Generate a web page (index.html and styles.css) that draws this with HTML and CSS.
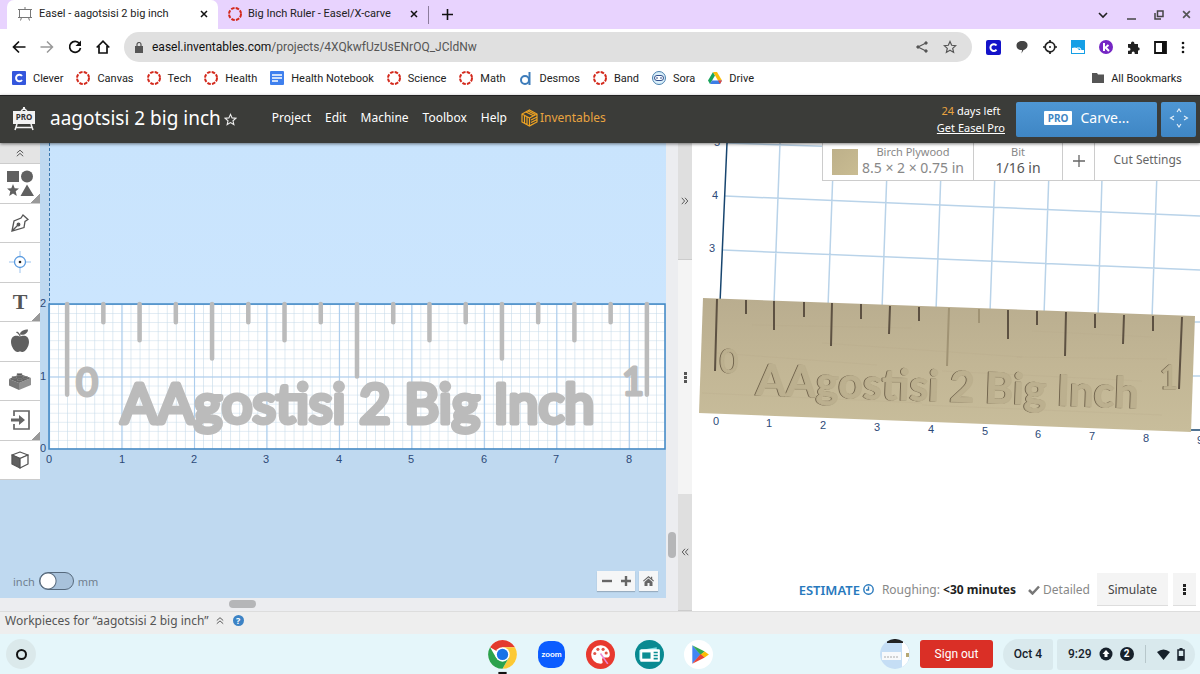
FILE: index.html
```
<!DOCTYPE html>
<html lang="en">
<head>
    <meta charset="UTF-8">
    <meta name="viewport" content="width=device-width, initial-scale=1">
    <title>Easel - aagotsisi 2 big inch</title>
    <link rel="stylesheet" href="styles.css">
</head>
<body>

<!-- Shared icons -->
<svg class="sprite" width="0" height="0" aria-hidden="true">
    <symbol id="ring" viewBox="0 0 14 14">
        <circle cx="7" cy="7" r="6" fill="none" stroke="#d3291c" stroke-width="2" stroke-dasharray="3.5 1.21"/>
    </symbol>
    <symbol id="close" viewBox="0 0 8 8">
        <path d="M1 1l6 6M7 1L1 7" fill="none" stroke="currentColor" stroke-width="1.5"/>
    </symbol>
    <symbol id="chevrons" viewBox="0 0 10 10">
        <path d="M1 5l4-3.5L9 5M1 9l4-3.5L9 9" fill="none" stroke="currentColor" stroke-width="1.2"/>
    </symbol>
    <symbol id="star" viewBox="0 0 14 14">
        <path d="M7 1.5l1.7 3.8 4 .4-3 2.7.9 4L7 10.3l-3.6 2.1.9-4-3-2.7 4-.4z" fill="none" stroke="currentColor" stroke-width="1.2"/>
    </symbol>
</svg>

<!-- Browser tabs -->
<div class="tabs">
    <div class="tab active">
        <svg width="16" height="16" viewBox="0 0 16 16" fill="none" stroke="#777" stroke-width="1"><path d="M2.5 3.5h11v8h-11zM1 3.5h14M1 11.5h14M8 1v2.5M4.5 11.5L3.5 14.5M11.5 11.5l1 3"/></svg>
        <span>Easel - aagotsisi 2 big inch</span>
        <button class="icon-btn" aria-label="Close tab"><svg width="8" height="8"><use href="#close"/></svg></button>
    </div>
    <div class="tab">
        <svg width="14" height="14"><use href="#ring"/></svg>
        <span>Big Inch Ruler - Easel/X-carve</span>
        <button class="icon-btn" aria-label="Close tab"><svg width="8" height="8"><use href="#close"/></svg></button>
    </div>
    <button class="icon-btn new-tab" aria-label="New tab"><svg width="11" height="11" viewBox="0 0 11 11" stroke="#111" stroke-width="1.6"><path d="M5.5 0v11M0 5.5h11"/></svg></button>
    <div class="window-buttons">
        <button class="icon-btn" aria-label="Search tabs"><svg width="10" height="10" viewBox="0 0 10 10" fill="none" stroke="#222" stroke-width="1.6"><path d="M1 3l4 4 4-4"/></svg></button>
        <button class="icon-btn" aria-label="Minimize"><svg width="10" height="10" viewBox="0 0 10 10" stroke="#444" stroke-width="1.5"><path d="M1 9h9"/></svg></button>
        <button class="icon-btn" aria-label="Restore"><svg width="10" height="10" viewBox="0 0 10 10" fill="none" stroke="#444" stroke-width="1.5"><path d="M3.5 1h5.5v5.5h-5.5zM1 3v6h6"/></svg></button>
        <button class="icon-btn grey" aria-label="Close window"><svg width="9" height="9"><use href="#close"/></svg></button>
    </div>
</div>

<!-- Address bar -->
<div class="toolbar">
    <button class="icon-btn" aria-label="Back"><svg width="14" height="14" viewBox="0 0 14 14" fill="none" stroke="#111" stroke-width="1.7"><path d="M13.5 7h-12M7 1.5L1.5 7 7 12.5"/></svg></button>
    <button class="icon-btn" aria-label="Forward"><svg width="14" height="14" viewBox="0 0 14 14" fill="none" stroke="#999" stroke-width="1.5"><path d="M.5 7h12M7 1.5L12.5 7 7 12.5"/></svg></button>
    <button class="icon-btn" aria-label="Reload"><svg width="14" height="14" viewBox="0 0 14 14" fill="none" stroke="#111" stroke-width="1.7"><path d="M11.5 3.5A5.5 5.5 0 1 0 12.500 8"/><path d="M13 .5v5.500H7.500z" fill="#111" stroke="none"/></svg></button>
    <button class="icon-btn" aria-label="Home"><svg width="14" height="14" viewBox="0 0 14 14" fill="none" stroke="#111" stroke-width="1.7"><path d="M.7 7.500L7 1.200l6.300 6.300M3 6v7h8V6"/></svg></button>
    <div class="address">
        <svg width="8" height="11" viewBox="0 0 8 11"><path d="M0 4h8v7H0z" fill="#555"/><path d="M2 4.500V2.500a2 2 0 0 1 4 0v2" fill="none" stroke="#555" stroke-width="1.2"/></svg>
        <p><b>easel.inventables.com</b>/projects/4XQkwfUzUsENrOQ_JCldNw</p>
        <button class="icon-btn" aria-label="Share"><svg width="12" height="12" viewBox="0 0 12 12" fill="#555" stroke="#555"><path d="M10 2L2 6l8 4" fill="none" stroke-width="1.2"/><circle cx="10" cy="2" r="1.2"/><circle cx="2" cy="6" r="1.2"/><circle cx="10" cy="10" r="1.2"/></svg></button>
        <button class="icon-btn grey" aria-label="Bookmark this page"><svg width="14" height="14"><use href="#star"/></svg></button>
    </div>
    <div class="extensions">
        <svg width="15" height="15" viewBox="0 0 15 15"><rect width="15" height="15" rx="2" fill="#1413c9"/><path d="M10.500 5.500A3.400 3.400 0 1 0 10.500 9.700" fill="none" stroke="#fff" stroke-width="2"/></svg>
        <svg width="14" height="14" viewBox="0 0 14 14" fill="#444"><path d="M7 1c4 0 6 2 5.500 5-.3 2-2 3.500-4 4L6.500 13.500 7 10C3 10 1.500 8 1.500 5.500 1.500 2.500 4 1 7 1z"/></svg>
        <svg width="14" height="14" viewBox="0 0 14 14" fill="none" stroke="#222" stroke-width="1.7"><circle cx="7" cy="7" r="4.800"/><path d="M7 0v3M7 11v3M0 7h3M11 7h3"/><circle cx="7" cy="7" r="1" fill="#222" stroke="none"/></svg>
        <svg width="14" height="14" viewBox="0 0 14 14"><path d="M0 0h14v14H0z" fill="#159fe6"/><path d="M1 8q3-1 5 0l2 2h5v3H1z" fill="#fff"/><path d="M6 8h3l2 4" fill="none" stroke="#fff"/></svg>
        <svg width="14" height="14" viewBox="0 0 14 14"><circle cx="7" cy="7" r="7" fill="#7526c4"/><path d="M5 3v8M9.500 5L6 8M6.500 7.500l3.500 3.500" stroke="#fff" stroke-width="2"/></svg>
        <svg width="13" height="13" viewBox="0 0 13 13" fill="#222"><path d="M1 3h3V2.200a1.700 1.700 0 0 1 3.400 0V3H11v3.200a1.700 1.700 0 0 1 0 3.400V13H7.700v-1a1.500 1.500 0 0 0-3 0v1H1V9.700h1a1.500 1.500 0 0 0 0-3H1z"/></svg>
        <svg width="13" height="13" viewBox="0 0 13 13"><path d="M1 1h11v11H1z" fill="none" stroke="#111" stroke-width="1.8"/><path d="M8 1h4v11H8z" fill="#111"/></svg>
        <button class="icon-btn" aria-label="Browser menu"><svg width="4" height="13" viewBox="0 0 4 13" fill="#111"><circle cx="2" cy="2" r="1.3"/><circle cx="2" cy="6.5" r="1.3"/><circle cx="2" cy="11" r="1.3"/></svg></button>
    </div>
</div>

<!-- Bookmarks -->
<nav class="bookmarks">
    <a href="#"><svg width="14" height="14" viewBox="0 0 14 14"><rect width="14" height="14" rx="1" fill="#3457dd"/><path d="M10 5A3.300 3.300 0 1 0 10 9" fill="none" stroke="#fff" stroke-width="2"/></svg>Clever</a>
    <a href="#"><svg width="14" height="14"><use href="#ring"/></svg>Canvas</a>
    <a href="#"><svg width="14" height="14"><use href="#ring"/></svg>Tech</a>
    <a href="#"><svg width="14" height="14"><use href="#ring"/></svg>Health</a>
    <a href="#"><svg width="14" height="14" viewBox="0 0 14 14"><rect width="14" height="14" rx="1" fill="#3f80ee"/><path d="M2 4h10M2 7h10M2 10h6" stroke="#fff" stroke-width="1.5"/></svg>Health Notebook</a>
    <a href="#"><svg width="14" height="14"><use href="#ring"/></svg>Science</a>
    <a href="#"><svg width="14" height="14"><use href="#ring"/></svg>Math</a>
    <a href="#"><svg width="14" height="14" viewBox="0 0 14 14" fill="none" stroke="#3d7cba" stroke-width="2"><circle cx="6" cy="9" r="4"/><path d="M10.500 1v13"/></svg>Desmos</a>
    <a href="#"><svg width="14" height="14"><use href="#ring"/></svg>Band</a>
    <a href="#"><svg width="14" height="14" viewBox="0 0 14 14" fill="#d9effa" stroke="#4a7fae"><circle cx="7" cy="7" r="6.500"/><rect x="2.500" y="4.500" width="9" height="5" rx="2.500" fill="#fff" stroke="#334f8c"/><path d="M5 6v2M9 6v2" stroke="#334f8c"/></svg>Sora</a>
    <a href="#"><svg width="14" height="14" viewBox="0 0 14 14"><path d="M5 1L0 9.500l2 3.500 5-8.500z" fill="#18a35b"/><path d="M5 1h4l5 8.500h-4z" fill="#fbbc07"/><path d="M4 9.500h10L12 13H2z" fill="#3c7de6"/><path d="M10 9.500h4L12 13z" fill="#ea4335"/></svg>Drive</a>
    <a href="#" class="all"><svg width="12" height="10" viewBox="0 0 12 10"><path d="M0 0h5l1 1.500h6V10H0z" fill="#555"/></svg>All Bookmarks</a>
</nav>

<!-- Easel header -->
<header class="app-header">
    <svg class="logo" width="24" height="24" viewBox="0 0 24 24"><path d="M11 0h2v3h-2zM1 4h22v13H1z" fill="#f2f2f2"/><path d="M5 17L3 23M19 17l2 6M4 20.500h16M9 4l3-2.500L15 4" fill="none" stroke="#f2f2f2" stroke-width="1.5"/><text x="12" y="13" text-anchor="middle" class="logo-text">PRO</text></svg>
    <h1>aagotsisi 2 big inch</h1>
    <button class="icon-btn white" aria-label="Favorite project"><svg width="13" height="13"><use href="#star"/></svg></button>
    <nav class="menu">
        <button>Project</button>
        <button>Edit</button>
        <button>Machine</button>
        <button>Toolbox</button>
        <button>Help</button>
        <a href="#"><svg width="17" height="18" viewBox="0 0 17 18" fill="none" stroke="#f0a422" stroke-width="1.2"><path d="M8.500 1L16 5v8l-7.500 4L1 13V5zM8.500 9v8M8.500 9L1 5M8.500 9L16 5M3.500 6.500v7.500M6 7.500v8M5 3l7.500 3.800M7 2l7 3.500M10 11l6-3M10 13.500l6-3M10 16l6-3"/></svg>Inventables</a>
    </nav>
    <div class="trial">
        <span><em>24</em> days left</span>
        <a href="#">Get Easel Pro</a>
    </div>
    <button class="carve"><b>PRO</b>Carve...</button>
    <button class="jog" aria-label="Jog machine"><svg width="20" height="20" viewBox="0 0 20 20" fill="none" stroke="#e8f2fb" stroke-width="1.1"><path d="M8 4l2-3 2 3M8 16l2 3 2-3M5 8l-3.500 2L5 12M15 8l3.500 2L15 12"/></svg></button>
</header>

<main class="workspace">
    <!-- 2D design -->
    <section class="design">
        <div class="canvas">
            <svg class="drawing" width="100%" height="100%">
                <defs>
                    <linearGradient id="sky" x1="0" y1="0" x2="0" y2="1">
                        <stop offset="0" stop-color="#c9e4fd"/>
                        <stop offset="1" stop-color="#cde6fe"/>
                    </linearGradient>
                    <pattern id="eighth" width="100" height="100" patternUnits="userSpaceOnUse">
                        <path d="M0 0V100M0 0H100" stroke="#c3d8e8" stroke-width="12"/>
                    </pattern>
                    <pattern id="inch" width="800" height="800" patternUnits="userSpaceOnUse">
                        <path d="M0 0V800M0 0H800" stroke="#a9cbed" stroke-width="24"/>
                    </pattern>
                </defs>
                <rect x="50" width="100%" height="306" fill="url(#sky)"/>
                <path d="M49.500 0V161" stroke="#3a78b0" stroke-dasharray="3 2"/>
                <svg x="49" y="161" width="616" height="145" viewBox="0 0 6800 1600" overflow="visible">
                    <rect width="6800" height="1600" fill="#fff"/>
                    <rect width="6800" height="1600" fill="url(#eighth)"/>
                    <rect width="6800" height="1600" fill="url(#inch)"/>
                    <rect width="6800" height="1600" fill="none" stroke="#4489c4" stroke-width="17"/>
                    <path class="cuts" d="M200 0V1000M600 0V200M1000 0V400M1400 0V200M1800 0V600M2200 0V200M2600 0V400M3000 0V200M3400 0V800M3800 0V200M4200 0V400M4600 0V200M5000 0V600M5400 0V200M5800 0V400M6200 0V200M6600 0V1000"/>
                </svg>
                <g class="lettering">
                    <text x="76" y="253" class="big-digit">0</text>
                    <text x="121" y="280">AAgostisi 2 Big Inch</text>
                    <text x="622" y="252" class="big-digit">1</text>
                </g>
                <g class="axis">
                    <text x="49" y="320">0</text><text x="122" y="320">1</text><text x="194" y="320">2</text>
                    <text x="266" y="320">3</text><text x="339" y="320">4</text><text x="411" y="320">5</text>
                    <text x="484" y="320">6</text><text x="556" y="320">7</text><text x="629" y="320">8</text>
                    <text x="43" y="309">0</text><text x="43" y="237">1</text><text x="43" y="164">2</text>
                </g>
            </svg>
            <div class="tools">
                <button class="collapse" aria-label="Collapse tools"><svg width="8" height="8"><use href="#chevrons"/></svg></button>
                <button class="more" aria-label="Shapes"><svg width="27" height="27" viewBox="0 0 27 27" fill="#606060"><path d="M0 1h12v11H0zM20 14.500L27 26H13.500zM6 14l1.700 4.200 4.300.3-3.300 2.800L9.800 26 6 23.500 2.200 26l1.100-4.700L0 18.500l4.300-.3z"/><circle cx="20" cy="6.500" r="6"/></svg></button>
                <button aria-label="Pen"><svg width="18" height="18" viewBox="0 0 18 18" fill="none" stroke="#555" stroke-width="1.3"><path d="M1 17L3 7l7-3 2-3 5 4.500-3 2-1 6zM1 17l5.500-5.500"/><circle cx="7.500" cy="10.500" r="1.300" fill="#555"/></svg></button>
                <button aria-label="Drill point"><svg width="22" height="22" viewBox="0 0 22 22" fill="none" stroke="#5b9be0"><circle cx="11" cy="11" r="5.500" stroke-width="1.3"/><path d="M11 0v5M11 17v5M0 11h5M17 11h5" stroke="#9cc3ee"/><circle cx="11" cy="11" r="1.300" fill="#222" stroke="none"/></svg></button>
                <button class="more letter">T</button>
                <button aria-label="Icons"><svg width="20" height="24" viewBox="0 0 20 24" fill="#606060"><path d="M10 8c2-2 9-2.500 9 5 0 5-4 10-6.500 10-1 0-1.500-.6-2.500-.6s-1.500.6-2.500.6C5 23 1 18 1 13 1 5.500 8 6 10 8zM10 5.500C10 2 14 .5 18 .5c0 4-4 6-8 5zM10 8.500C9.500 6 8 4.500 6 3.500l1-1C9.500 3.500 10.500 6 10.800 8z"/></svg></button>
                <button aria-label="Apps"><svg width="23" height="18" viewBox="0 0 23 18"><path d="M0 7l10 4v7L0 13.500z" fill="#777"/><path d="M10 11l12-5v7l-12 5z" fill="#929292"/><path d="M0 7l11-5 11 4-12 5z" fill="#666"/><path d="M8 3.500V1.500h5v2zM3 6V4.500h4.500V6zM14 6V4.500h4.500V6zM8.500 8.500V7H13v1.500z" fill="#555" stroke="#999" stroke-width=".5"/></svg></button>
                <button class="more" aria-label="Import"><svg width="19" height="20" viewBox="0 0 19 20"><path d="M3 6V1h15v18H3v-5" fill="none" stroke="#666" stroke-width="1.7"/><path d="M0 8.500h8V5l6 5-6 5v-3.500H0z" fill="#666"/></svg></button>
                <button aria-label="3D"><svg width="18" height="18" viewBox="0 0 18 18" fill="#fff" stroke="#555" stroke-width="1.3" stroke-linejoin="round"><path d="M1 4l8-3 8 3-8 3.500z"/><path d="M1 4l8 3.500V17l-8-4z" fill="#606060"/><path d="M17 4v9l-8 4V7.500z"/></svg></button>
            </div>
            <div class="canvas-controls">
                <label class="units"><span>inch</span><input type="checkbox"><span>mm</span></label>
                <div class="zoom">
                    <button aria-label="Zoom out"><svg width="10" height="10" viewBox="0 0 10 10" stroke="#666" stroke-width="2.4"><path d="M0 5h10"/></svg></button>
                    <button aria-label="Zoom in"><svg width="10" height="10" viewBox="0 0 10 10" stroke="#666" stroke-width="2.4"><path d="M0 5h10M5 0v10"/></svg></button>
                </div>
                <div class="zoom">
                    <button aria-label="Reset view"><svg width="11" height="10" viewBox="0 0 11 10" fill="#666"><path d="M5.500 0L8 2V.8h1.200V3L11 4.700l-.7.8L5.500 1.600.7 5.500 0 4.700z"/><path d="M5.500 2.600L9.500 6v4h-3V7h-2v3h-3V6z"/></svg></button>
                </div>
            </div>
        </div>
        <div class="scroll-y"><i></i></div>
        <div class="scroll-x"><i></i></div>
    </section>

    <!-- Pane divider -->
    <div class="divider">
        <button aria-label="Expand design"><svg class="turn-right" width="8" height="8"><use href="#chevrons"/></svg></button>
        <span><svg width="3" height="11" viewBox="0 0 3 11" fill="#555"><path d="M0 0h3v3H0zM0 4h3v3H0zM0 8h3v3H0z"/></svg></span>
        <button aria-label="Expand preview"><svg class="turn-left" width="8" height="8"><use href="#chevrons"/></svg></button>
    </div>

    <!-- 3D preview -->
    <section class="preview">
        <svg class="scene" width="100%" height="100%">
            <defs>
                <linearGradient id="wood" x1="0" y1="0" x2="0" y2="1">
                    <stop offset="0" stop-color="#b9ad8f"/>
                    <stop offset=".5" stop-color="#c2b695"/>
                    <stop offset="1" stop-color="#c8bd9b"/>
                </linearGradient>
            </defs>
            <path class="grid-line" d="M88 0L82 160M142 0L136 164M196 0L190 166M250 0L244 168M304 0L298 170M358 0L352 172M411 0L406 174M466 0L460 176M35 0L300 9M33 53L508 73M31 107L508 127M500 179h8M500 233h8"/>
            <path class="axis-line" d="M35 0L28 160M498 287h10"/>
            <path d="M11 155L503 173 499 289 7 270z" fill="url(#wood)"/>
            <path class="grain" d="M60 182l160 3M130 200l200 14M325 214l150 2M25 210l160 12M10 250l220 10M230 262l240 10M340 188l120 6M250 228l200 10"/>
            <path class="groove" d="M25 156L23 228M54 157V171M82 158V187M112 159V174M140 160L139 203M169 161V176M198 163L197 191M227 164V178M316 167V196M345 168V182M374 169L373 213M403 171V185M432 172L431 201M461 173V188M490 174L487 246"/>
            <path class="groove faint" d="M257 165L255 223M287 166V180"/>
            <g class="engraved">
                <text x="28" y="230" class="engraved-digit">0</text>
                <text x="64" y="252" transform="rotate(2 64 252)">AAgostisi 2 Big Inch</text>
                <text x="468" y="246" class="engraved-digit">1</text>
            </g>
            <g class="axis">
                <text x="24" y="282">0</text><text x="77" y="284">1</text><text x="131" y="286">2</text>
                <text x="185" y="288">3</text><text x="239" y="290">4</text><text x="293" y="292">5</text>
                <text x="346" y="295">6</text><text x="400" y="297">7</text><text x="454" y="299">8</text>
                <text x="508" y="301">9</text><text x="20" y="109">3</text><text x="23" y="56">4</text><text x="25" y="3">5</text>
            </g>
        </svg>
        <div class="material-bar">
            <button class="material"><i></i><span>Birch Plywood<strong>8.5 × 2 × 0.75 in</strong></span></button>
            <button class="bit"><span>Bit<strong>1/16 in</strong></span></button>
            <button class="add" aria-label="Add bit"><svg width="12" height="12" viewBox="0 0 12 12" stroke="#666" stroke-width="1.3"><path d="M6 0v12M0 6h12"/></svg></button>
            <button class="cut">Cut Settings</button>
        </div>
        <div class="estimate">
            <a href="#">ESTIMATE <svg width="11" height="11" viewBox="0 0 11 11" fill="none" stroke="#2879bd" stroke-width="1.4"><circle cx="5.500" cy="5.500" r="4.700"/><path d="M5.500 2.500v3.500H3"/></svg></a>
            <span>Roughing: <b>&lt;30 minutes</b></span>
            <span class="detailed"><svg width="12" height="10" viewBox="0 0 12 10" fill="none" stroke="#777" stroke-width="2.5"><path d="M1 5l3.500 3.500L11 1.500"/></svg> Detailed</span>
            <button class="simulate">Simulate</button>
            <button class="dots" aria-label="More options"><svg width="3" height="11" viewBox="0 0 3 11" fill="#222"><path d="M0 0h3v3H0zM0 4h3v3H0zM0 8h3v3H0z"/></svg></button>
        </div>
    </section>
</main>

<!-- Workpieces -->
<footer class="workpieces">
    <button>Workpieces for “aagotsisi 2 big inch” <svg width="8" height="9"><use href="#chevrons"/></svg></button>
    <button class="help" aria-label="Help">?</button>
</footer>

<!-- Shelf -->
<div class="shelf">
    <button class="launcher" aria-label="Launcher"><i></i></button>
    <div class="apps">
        <svg width="29" height="34" viewBox="0 0 28 33"><circle cx="14" cy="14" r="14" fill="#fff"/><path d="M14 14L1.900 7A14 14 0 0 1 26.100 7H14z" fill="#e33b2e"/><path d="M26.100 7A14 14 0 0 1 14 28l6-10.500L14 7z" fill="#fcc934"/><path d="M1.900 7A14 14 0 0 0 14 28l6-10.500H8z" fill="#2ba24c"/><circle cx="14" cy="14" r="7" fill="#fff"/><circle cx="14" cy="14" r="5.500" fill="#1a73e8"/><path d="M10 31h8v2h-8z" fill="#111"/></svg>
        <svg width="29" height="29" viewBox="0 0 28 28"><rect x="1" y="1" width="26" height="26" rx="10" fill="#0b5cff"/><text x="14" y="16" text-anchor="middle" class="zoom-text">zoom</text></svg>
        <svg width="29" height="29" viewBox="0 0 28 28"><circle cx="14" cy="14" r="14" fill="#e8392f"/><path d="M14 5a9 9 0 1 0 0 18c2 0 2.500-1.500 1.800-3s0-3 2-3H20c2 0 3-1 3-3 0-5-4-9-9-9z" fill="#fff"/><g fill="#e05548"><circle cx="8.500" cy="13" r="1.500"/><circle cx="11.500" cy="9" r="1.500"/><circle cx="16.500" cy="9" r="1.500"/><circle cx="19.500" cy="12.500" r="1.500"/></g><path d="M14 13l7 10" stroke="#ee86d4" stroke-width="1.5"/></svg>
        <svg width="29" height="29" viewBox="0 0 28 28"><circle cx="14" cy="14" r="14" fill="#098a91"/><path d="M4 10l17-3v12H4z" fill="#7fdce0"/><rect x="5" y="9" width="19" height="12" rx="1" fill="#fff"/><path d="M7 12h8v6H7z" fill="#0b8d93"/><path d="M18 12h4M18 15h4M18 18h4" stroke="#0b8d93" stroke-width="1.5"/></svg>
        <svg width="29" height="29" viewBox="0 0 28 28"><circle cx="14" cy="14" r="14" fill="#fff"/><path d="M8 5v18l8-9z" fill="#4285f4"/><path d="M8 5l12 6-4 3.500z" fill="#34a853"/><path d="M20 11l4 3-4 3-4-3z" fill="#fbbc04"/><path d="M8 23l12-6-4-3.500z" fill="#ea4335"/></svg>
    </div>
    <div class="tray">
        <svg width="30" height="30" viewBox="0 0 30 30"><circle cx="15" cy="15" r="15" fill="#c5def5"/><path d="M22 2a15 15 0 0 1 0 26z" fill="#fff"/><path d="M7 2.500a15 15 0 0 1 16 0V4H7z" fill="#222"/><path d="M2 13h19v8H2z" fill="#f7f9fb"/><path d="M4 18h14" stroke="#aaa" stroke-dasharray="2 1"/><path d="M26 14h3v4h-3z" fill="#b6a873"/></svg>
        <button class="sign-out">Sign out</button>
        <button class="date">Oct 4</button>
        <button class="status">9:29
            <svg width="14" height="14" viewBox="0 0 14 14"><circle cx="7" cy="7" r="6.500" fill="#17212b"/><path d="M7 3l3.500 4H8.500v3h-3V7h-2z" fill="#fff"/></svg>
            <b>2</b>
            <i></i>
            <svg width="13" height="11" viewBox="0 0 13 11"><path d="M0 3q6.500-5 13 0L6.500 11z" fill="#17212b"/></svg>
            <svg width="8" height="13" viewBox="0 0 8 13" fill="#17212b"><path d="M2.500 0h3v2h-3z"/><rect x="1" y="2" width="6" height="10" fill="none" stroke="#17212b" stroke-width="1.5"/><path d="M1 8h6v4H1z"/></svg>
        </button>
    </div>
</div>
</body>
</html>
```
FILE: styles.css
```
* {
    box-sizing: border-box;
}
body {
    margin: 0;
    height: 100vh;
    display: flex;
    flex-direction: column;
    overflow: hidden;
    font-family: "Noto Sans", "Open Sans", sans-serif;
    font-size: 12px;
    color: #555;
    background: #fff;
}
button {
    margin: 0;
    padding: 0;
    border: 0;
    background: none;
    font: inherit;
    color: inherit;
    cursor: pointer;
}
a {
    color: inherit;
    text-decoration: none;
}
svg {
    flex: none;
    display: block;
}
.sprite {
    position: absolute;
}
.icon-btn {
    display: flex;
    align-items: center;
    color: #111;
}
.icon-btn.grey { color: #555; }
.icon-btn.white { color: #eee; }

/* Browser */
.tabs, .toolbar, .bookmarks, .shelf {
    font-family: Roboto, sans-serif;
    font-size: 11px;
    color: #222;
}
.tabs {
    display: flex;
    align-items: center;
    height: 29px;
    padding-left: 7px;
    background: #e8d3fe;
}
.tab {
    display: flex;
    align-items: center;
    gap: 6px;
    width: 210px;
    height: 29px;
    padding: 0 10px 2px;
}
.tab span {
    flex: 1;
    white-space: nowrap;
}
.tab.active {
    width: 211px;
    background: #fff;
    border-radius: 7px 7px 0 0;
}
.new-tab {
    height: 18px;
    padding-left: 13px;
    border-left: 1px solid #8c7c9c;
}
.window-buttons {
    display: flex;
    align-items: center;
    gap: 18px;
    margin-left: auto;
    padding-right: 9px;
}
.toolbar {
    display: flex;
    align-items: center;
    gap: 14px;
    height: 36px;
    padding: 0 16px 0 12px;
}
.address {
    flex: 1;
    display: flex;
    align-items: center;
    gap: 15px;
    height: 30px;
    padding: 0 15px 0 11px;
    border-radius: 15px;
    background: #e0e0e0;
    font-size: 12px;
    color: #555;
}
.address p {
    flex: 1;
    margin: 0 0 0 -6px;
}
.address b {
    font-weight: 400;
    color: #111;
}
.extensions {
    display: flex;
    align-items: center;
    gap: 14px;
    margin-right: -1px;
}
.bookmarks {
    display: flex;
    align-items: center;
    gap: 13px;
    height: 30px;
    padding: 0 18px 4px 12px;
}
.bookmarks a {
    display: flex;
    align-items: center;
    gap: 7px;
}
.bookmarks .all {
    margin-left: auto;
}

/* Easel header */
.app-header {
    position: relative;
    display: flex;
    align-items: center;
    height: 48px;
    padding: 0 4px 1px 12px;
    border-top: 1px solid #222;
    background: #3b3c39;
    box-shadow: 0 1px 3px rgba(0,0,0,0.5);
    color: #fff;
}
.logo-text {
    font: bold 8px "Noto Sans", sans-serif;
    fill: #333;
}
.app-header h1 {
    margin: 0 3px 0 14px;
    font-size: 19px;
    font-weight: 400;
    line-height: 24px;
    padding-bottom: 2px;
}
.menu {
    display: flex;
    align-items: center;
    gap: 14px;
    margin-left: 35px;
    padding-bottom: 3px;
}
.menu a {
    display: flex;
    align-items: center;
    gap: 2px;
    color: #e9a440;
}
.trial {
    display: flex;
    flex-direction: column;
    align-items: center;
    margin-left: auto;
    margin-right: 11px;
    font-size: 11px;
    line-height: 17px;
}
.trial em {
    font-style: normal;
    color: #e9a440;
}
.trial a {
    text-decoration: underline;
}
.carve, .jog {
    display: flex;
    align-items: center;
    justify-content: center;
    height: 35px;
    padding-bottom: 3px;
    border-radius: 2px;
    background: linear-gradient(#4e97d5, #3f86c4);
}
.carve {
    gap: 8px;
    width: 141px;
    margin-right: 4px;
    font-size: 14px;
}
.carve b {
    padding: 0 4px;
    border-radius: 1px;
    background: #fff;
    color: #3f86c4;
    font-size: 10px;
    line-height: 14px;
}
.jog {
    width: 35px;
}

/* Workspace */
.workspace {
    flex: 1;
    display: grid;
    grid-template-columns: 678fr 14px 508fr;
    min-height: 0;
}
.design {
    display: grid;
    grid-template-columns: 1fr 12px;
    grid-template-rows: 1fr 13px;
    min-height: 0;
    background: #ecedf0;
}
.canvas, .preview {
    display: grid;
    min-width: 0;
    min-height: 0;
    overflow: hidden;
}
.canvas {
    background: #bfd9f0;
}
.drawing, .scene, .tools, .canvas-controls, .material-bar, .estimate {
    grid-area: 1 / 1;
}
.cuts {
    fill: none;
    stroke: #bbb;
    stroke-width: 50;
    stroke-linecap: round;
}
.lettering {
    font: 54px Lato, sans-serif;
    fill: #bbb;
    stroke: #bbb;
    stroke-width: 5px;
    stroke-linejoin: round;
}
.big-digit {
    font-size: 38px;
    stroke-width: 3px;
}
.axis {
    font: 11px "Liberation Sans", sans-serif;
    fill: #2d4a78;
    text-anchor: middle;
}
.tools {
    align-self: start;
    display: flex;
    flex-direction: column;
    width: 40px;
    height: 337px;
}
.tools button {
    flex: 1;
    display: flex;
    align-items: center;
    justify-content: center;
    border-bottom: 1px solid #ccc;
    background: #fff;
}
.tools .collapse {
    flex: none;
    height: 21px;
    background: #e4e4e4;
}
.tools .more {
    background: linear-gradient(135deg, transparent 50%, #999 50%) right bottom / 9px 9px no-repeat #fff;
}
.tools .letter {
    font: bold 22px "Liberation Serif", serif;
}
.canvas-controls {
    align-self: end;
    display: flex;
    align-items: center;
    gap: 4px;
    padding: 0 8px 7px 13px;
}
.units {
    display: flex;
    align-items: center;
    gap: 4px;
    margin-right: auto;
    font-size: 11px;
    color: #71808f;
}
.units input {
    appearance: none;
    width: 35px;
    height: 18px;
    margin: 0;
    border: 1px solid #56697c;
    border-radius: 9px;
    background: radial-gradient(circle at 8px 8px, #fff 7px, #56697c 8px, #a8c2db 9px);
}
.zoom {
    display: flex;
    background: #f5f6f7;
    box-shadow: 0 1px 1px rgba(0,0,0,0.2);
}
.zoom button {
    display: flex;
    align-items: center;
    justify-content: center;
    width: 19px;
    height: 20px;
}
.scroll-y i {
    display: block;
    width: 8px;
    height: 26px;
    margin: 389px 0 0 2px;
    border-radius: 4px;
    background: #b5b6b8;
}
.scroll-x i {
    display: block;
    width: 27px;
    height: 8px;
    margin: 2px 0 0 229px;
    border-radius: 4px;
    background: #b5b6b8;
}
.divider {
    display: grid;
    grid-template-rows: 1fr 2fr 1fr;
    background: #f4f4f4;
}
.divider > * {
    display: flex;
    align-items: center;
    justify-content: center;
}
.divider button {
    background: #dfdfdf;
    border-bottom: 1px solid #ccc;
}
.turn-right { transform: rotate(90deg); }
.turn-left { transform: rotate(-90deg); }

/* Preview */
.grid-line {
    fill: none;
    stroke: #b9d3e9;
    stroke-width: 1.5;
}
.axis-line {
    stroke: #17456f;
    stroke-width: 1.5;
}
.grain {
    fill: none;
    stroke: #b3a685;
    opacity: 0.2;
}
.groove {
    fill: none;
    stroke: #5d5142;
    stroke-width: 2;
}
.groove.faint {
    stroke: #a09374;
}
.engraved {
    font: bold 43px Lato, sans-serif;
    fill: #bcb08f;
    stroke: #bcb08f;
    stroke-linejoin: round;
    filter: drop-shadow(-1px 0 0 #73664f);
}
.engraved-digit {
    font-size: 32px;
    font-weight: 400;
}
.material-bar {
    align-self: start;
    justify-self: end;
    display: flex;
    width: 378px;
    height: 38px;
    border: 1px solid #ccc;
    border-width: 0 0 1px 1px;
    background: #fff;
    color: #888;
}
.material-bar button {
    display: flex;
    align-items: center;
    justify-content: center;
    gap: 4px;
    border-right: 1px solid #ccc;
    font-size: 11px;
    line-height: 16px;
}
.material-bar span {
    padding-bottom: 3px;
}
.material-bar strong {
    display: block;
    font-size: 14px;
    font-weight: 400;
}
.material { width: 151px; }
.material i {
    width: 26px;
    height: 26px;
    background: linear-gradient(135deg, #bdb08a, #c9bc92);
}
.bit { width: 89px; }
.bit strong { color: #555; }
.material-bar .add {
    width: 32px;
    padding-bottom: 2px;
}
.material-bar .cut {
    flex: 1;
    padding-bottom: 4px;
    border: 0;
    font-size: 12px;
    color: #666;
}
.estimate {
    align-self: end;
    justify-self: end;
    display: flex;
    align-items: center;
    padding: 0 4px 5px 0;
    color: #888;
}
.estimate a, .detailed {
    display: flex;
    align-items: center;
    gap: 3px;
}
.estimate a {
    margin-right: 8px;
    font-size: 13px;
    font-weight: 600;
    color: #2879bd;
}
.estimate b { color: #222; }
.detailed {
    margin: 0 7px 0 12px;
}
.estimate button {
    display: flex;
    align-items: center;
    justify-content: center;
    height: 33px;
    background: #f4f4f4;
    border-bottom: 1px solid #ddd;
    color: #444;
}
.estimate .simulate {
    width: 71px;
    margin-right: 5px;
}
.estimate .dots {
    width: 23px;
}

/* Workpieces */
.workpieces {
    display: flex;
    align-items: center;
    gap: 9px;
    height: 23px;
    padding: 0 5px 5px;
    border-top: 1px solid #ddd;
    background: #eee;
}
.workpieces button {
    display: flex;
    align-items: center;
    gap: 7px;
}
.workpieces .help {
    justify-content: center;
    width: 11px;
    height: 11px;
    border-radius: 50%;
    background: #3c83c5;
    color: #fff;
    font-size: 9px;
    font-weight: bold;
}

/* Shelf */
.shelf {
    display: grid;
    grid-template-columns: 1fr auto 1fr;
    align-items: center;
    height: 40px;
    padding: 0 5px 0 6px;
    background: #e5f6fa;
}
.launcher {
    display: flex;
    align-items: center;
    justify-content: center;
    width: 30px;
    height: 30px;
    border-radius: 50%;
    background: #dbe9eb;
}
.launcher i {
    width: 11px;
    height: 11px;
    border: 2px solid #111;
    border-radius: 50%;
}
.apps {
    display: flex;
    gap: 20px;
    padding-top: 5px;
}
.zoom-text {
    font: bold 8px Lato, sans-serif;
    fill: #fff;
}
.tray {
    display: flex;
    align-items: center;
    justify-content: flex-end;
    font-size: 12px;
}
.sign-out {
    width: 73px;
    height: 28px;
    margin: 0 10px;
    border-radius: 3px;
    background: #da2f26;
    color: #fff;
}
.date, .status {
    height: 31px;
    background: #d9e9ed;
    color: #17212b;
    font-weight: 500;
}
.date {
    width: 50px;
    margin-right: 4px;
    border-radius: 16px 3px 3px 16px;
}
.status {
    display: flex;
    align-items: center;
    gap: 7px;
    width: 138px;
    padding-left: 11px;
    border-radius: 3px 16px 16px 3px;
}
.status b {
    width: 14px;
    border-radius: 50%;
    background: #17212b;
    color: #fff;
    font-size: 10px;
    line-height: 14px;
}
.status i {
    width: 1px;
    height: 18px;
    margin: 0 4px;
    background: #b7c7cb;
}
```
